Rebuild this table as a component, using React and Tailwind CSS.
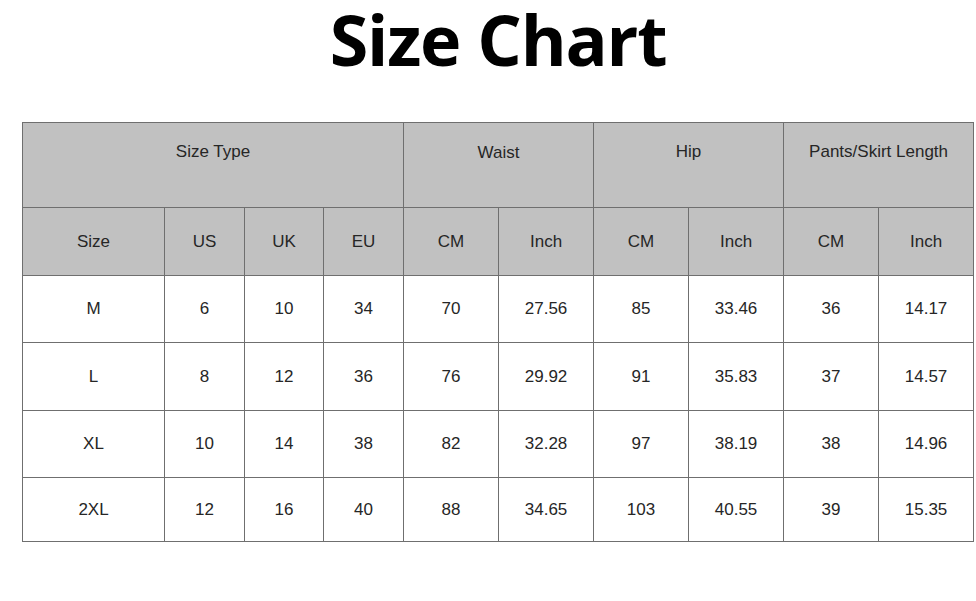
const widths = [142, 80, 79, 80, 95, 95, 95, 95, 95, 95];

const rows = [
  ['M', '6', '10', '34', '70', '27.56', '85', '33.46', '36', '14.17'],
  ['L', '8', '12', '36', '76', '29.92', '91', '35.83', '37', '14.57'],
  ['XL', '10', '14', '38', '82', '32.28', '97', '38.19', '38', '14.96'],
  ['2XL', '12', '16', '40', '88', '34.65', '103', '40.55', '39', '15.35'],
];

const rowHeights = ['h-[67px]', 'h-[68px]', 'h-[67px]', 'h-[64px]'];

export default function App() {
  return (
    <div className="w-[976px] h-[601px] bg-white overflow-hidden">
      <div className="w-[952px] ml-[22px]">
        {/* Title */}
        <div className="h-[122px] text-center">
          <h1 className="font-['Open_Sans',sans-serif] font-bold text-[70px] leading-[78px] text-black tracking-[-1.2px]">
            Size Chart
          </h1>
        </div>

        {/* Chart */}
        <table className="w-[952px] table-fixed border-collapse font-['Liberation_Sans',Arial,sans-serif] text-[17px] text-[#262626]">
          <colgroup>
            {widths.map((w, i) => (
              <col key={i} style={{ width: w }} />
            ))}
          </colgroup>
          <thead>
            <tr className="h-[85px] bg-[#c1c1c1]">
              <th colSpan={4} className="border border-[#6f6f6f] align-top pt-[16px] font-normal">
                Size Type
              </th>
              <th colSpan={2} className="border border-[#6f6f6f] align-top pt-[17px] font-normal">
                Waist
              </th>
              <th colSpan={2} className="border border-[#6f6f6f] align-top pt-[16px] font-normal">
                Hip
              </th>
              <th colSpan={2} className="border border-[#6f6f6f] align-top pt-[16px] font-normal">
                Pants/Skirt Length
              </th>
            </tr>
            <tr className="h-[68px] bg-[#c1c1c1]">
              {['Size', 'US', 'UK', 'EU', 'CM', 'Inch', 'CM', 'Inch', 'CM', 'Inch'].map((t, i) => (
                <th key={i} className="border border-[#6f6f6f] font-normal">
                  {t}
                </th>
              ))}
            </tr>
          </thead>
          <tbody>
            {rows.map((row, r) => (
              <tr key={r} className={rowHeights[r]}>
                {row.map((v, i) => (
                  <td key={i} className="border border-[#6f6f6f] text-center">
                    {v}
                  </td>
                ))}
              </tr>
            ))}
          </tbody>
        </table>
      </div>
    </div>
  );
}
